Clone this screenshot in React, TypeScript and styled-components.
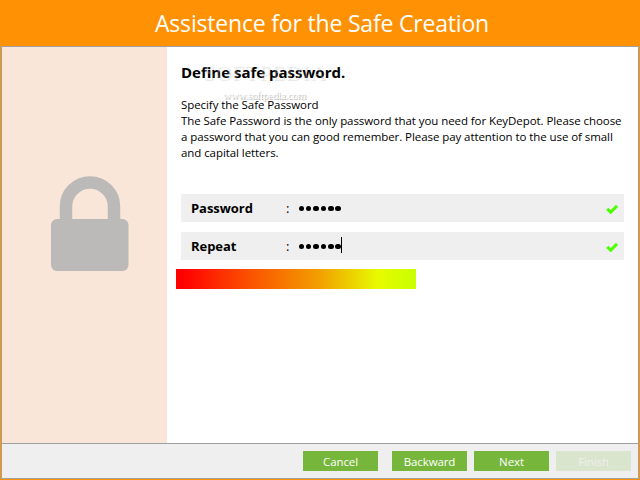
import React from "react";
import styled, { createGlobalStyle } from "styled-components";

const GlobalStyle = createGlobalStyle`
  * { box-sizing: border-box; }
  body { margin: 0; overflow: hidden; }
`;

const Window = styled.div`
  display: flex;
  flex-direction: column;
  width: 640px;
  height: 480px;
  padding: 0 1px 1px;
  background: #ff9104;
  color: #000;
  font-family: "Open Sans", "Noto Sans", sans-serif;
`;

const TitleBar = styled.h1`
  height: 46px;
  margin: 0;
  padding-left: 154px;
  color: #fff;
  font-size: 23px;
  font-weight: 400;
  line-height: 47px;
  letter-spacing: -0.19px;
  white-space: nowrap;
`;

const Frame = styled.div`
  flex: 1;
  display: flex;
  flex-direction: column;
  border: 1px solid #a0a0a0;
`;

const Body = styled.div`
  flex: 1;
  display: flex;
  background: #fff;
`;

const Sidebar = styled.aside`
  width: 165px;
  padding: 129px 0 0 49px;
  background: #f9e6d9;
`;

const LockIcon = styled.svg`
  display: block;
  width: 78px;
  height: 95px;
`;

const Content = styled.main`
  width: 471px;
  padding: 15px 14px 0 9px;
`;

const Intro = styled.section`
  position: relative;
  height: 132px;
  padding-left: 5px;
`;

const Heading = styled.h2`
  margin: 0 0 15px;
  font-size: 15px;
  font-weight: 700;
  line-height: 20px;
  letter-spacing: 0;
`;

const Line = styled.div`
  font-size: 11.5px;
  line-height: 16px;
  letter-spacing: -0.07px;
  white-space: nowrap;
`;

const Watermark = styled.div`
  position: absolute;
  top: 0;
  left: 27px;
  color: rgba(255, 255, 255, 0.25);
  font-family: "Liberation Serif", serif;
  font-size: 21px;
  line-height: 22px;
  letter-spacing: 1.2px;
  text-shadow: 1px 1px 1px rgba(0, 0, 0, 0.11);
  white-space: nowrap;
`;

const Trademark = styled.sup`
  font-size: 8px;
  line-height: 0;
`;

const WatermarkUrl = styled.div`
  margin-top: 4px;
  padding-left: 20px;
  color: #fff;
  font-size: 11px;
  line-height: 14px;
  letter-spacing: -0.3px;
  text-shadow: 1px 1px 1px #aaa;
`;

const Fields = styled.div`
  display: grid;
  gap: 10px;
  padding-left: 5px;
`;

const FieldRow = styled.div`
  display: flex;
  align-items: center;
  width: 443px;
  height: 28px;
  padding: 0 6px 0 10px;
  background: #efefef;
`;

const Label = styled.label`
  width: 95px;
  font-size: 13px;
  font-weight: 700;
  line-height: 28px;
  letter-spacing: -0.05px;
`;

const Colon = styled.span`
  width: 12.5px;
  font-size: 13px;
`;

const Dots = styled.div`
  display: flex;
  gap: 1.9px;
  padding-top: 1px;
`;

const Dot = styled.i`
  width: 5.5px;
  height: 5.5px;
  border-radius: 50%;
  background: #000;
`;

const Caret = styled.i`
  width: 1px;
  height: 16px;
  margin-top: -2px;
  background: #000;
`;

const CheckIcon = styled.svg`
  width: 12px;
  height: 10px;
  margin: 2px 0 0 auto;
`;

const StrengthBar = styled.div`
  width: 240px;
  height: 20px;
  margin-top: 9px;
  background: linear-gradient(90deg, #f00 3%, #fc4a00 28%, #f2a000 60%, #e8fa00 84%, #c8ff00);
`;

const Footer = styled.footer`
  display: flex;
  justify-content: flex-end;
  gap: 7px;
  height: 35px;
  padding: 7px 7px 0 0;
  border-top: 1px solid #a0a0a0;
  background: #efefef;
`;

const Button = styled.button<{ $gapAfter?: number }>`
  width: 75px;
  height: 20px;
  margin: 0 ${(p) => p.$gapAfter ?? 0}px 0 0;
  padding: 1px 0 0;
  border: 0;
  background: #76b63a;
  color: #fff;
  font: 11.5px/20px "Open Sans", "Noto Sans", sans-serif;
  letter-spacing: -0.1px;
  &:disabled {
    background: #d9e5cd;
    color: #efefef;
  }
`;

const introLines = [
  "Specify the Safe Password",
  "The Safe Password is the only password that you need for KeyDepot. Please choose",
  "a password that you can good remember. Please pay attention to the use of small",
  "and capital letters.",
];

function PasswordField({ label, focused = false }: { label: string; focused?: boolean }) {
  return (
    <FieldRow>
      <Label>{label}</Label>
      <Colon>:</Colon>
      <Dots>{Array.from({ length: 6 }, (_, i) => <Dot key={i} />)}</Dots>
      {focused && <Caret />}
      <CheckIcon viewBox="0 0 12 10">
        <path d="M1.2 4.8 4.7 8.2 11 1.8" fill="none" stroke="#4cff00" strokeWidth="3" />
      </CheckIcon>
    </FieldRow>
  );
}

export default function App() {
  return (
    <Window>
      <GlobalStyle />
      <TitleBar>Assistence for the Safe Creation</TitleBar>
      <Frame>
        <Body>
          <Sidebar>
            <LockIcon viewBox="0 0 78 95">
              <path d="M15 48V30.500a24 24 0 0 1 48 0V48" fill="none" stroke="#bbbab8" strokeWidth="12.500" />
              <rect x="0" y="43" width="77.500" height="52" rx="6" fill="#bbbab8" />
            </LockIcon>
          </Sidebar>
          <Content>
            <Intro>
              <Heading>Define safe password.</Heading>
              {introLines.map((line) => (
                <Line key={line}>{line}</Line>
              ))}
              <Watermark>
                SOFTPEDIA<Trademark>™</Trademark>
                <WatermarkUrl>www.softpedia.com</WatermarkUrl>
              </Watermark>
            </Intro>
            <Fields>
              <PasswordField label="Password" />
              <PasswordField label="Repeat" focused />
            </Fields>
            <StrengthBar />
          </Content>
        </Body>
        <Footer>
          <Button $gapAfter={7}>Cancel</Button>
          <Button>Backward</Button>
          <Button>Next</Button>
          <Button disabled>Finish</Button>
        </Footer>
      </Frame>
    </Window>
  );
}
